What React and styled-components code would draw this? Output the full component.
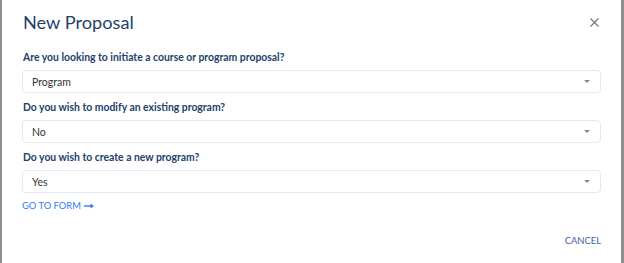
import React from 'react';
import styled, { createGlobalStyle } from 'styled-components';

const GlobalStyle = createGlobalStyle`
  html, body {
    margin: 0;
    padding: 0;
    background: #8f8f8f;
  }
  body {
    font-family: Lato, 'Open Sans', sans-serif;
  }
`;

const Backdrop = styled.div`
  display: flex;
  padding-left: 2px;
  height: 263px;
`;

const Dialog = styled.div`
  width: 619px;
  height: 263px;
  box-sizing: border-box;
  background: #ffffff;
  padding: 9px 20px 0 20px;
  display: flex;
  flex-direction: column;
`;

const Header = styled.div`
  display: flex;
  justify-content: space-between;
  align-items: center;
  height: 26px;
`;

const Title = styled.h2`
  margin: 0 0 0 1px;
  font-size: 18.2px;
  font-weight: 400;
  color: #233f6c;
  line-height: 26px;
`;

const CloseButton = styled.button`
  border: none;
  background: transparent;
  padding: 0;
  width: 14px;
  height: 14px;
  display: flex;
  align-items: center;
  justify-content: center;
  cursor: pointer;
`;

const Field = styled.div`
  display: flex;
  flex-direction: column;
  margin-top: ${(p) => p.$top}px;
`;

const Label = styled.label`
  font-size: 10.4px;
  font-weight: 700;
  color: #233f6c;
  line-height: 14px;
  margin: 0 0 6px 1px;
`;

const Select = styled.div`
  height: 23px;
  box-sizing: border-box;
  border: 1px solid #e4e9ef;
  border-radius: 4px;
  display: flex;
  align-items: center;
  justify-content: space-between;
  padding: 0 10px 0 9px;
  font-size: 10.5px;
  color: #333333;
`;

const Caret = styled.span`
  width: 0;
  height: 0;
  border-left: 3.5px solid transparent;
  border-right: 3.5px solid transparent;
  border-top: 3.5px solid #8a8a8a;
`;

const FormLink = styled.a`
  margin-top: 7px;
  font-size: 9.4px;
  color: #2f7df2;
  text-decoration: none;
  display: flex;
  align-items: center;
  gap: 3px;
  line-height: 12px;
`;

const Footer = styled.div`
  display: flex;
  justify-content: flex-end;
  margin-top: 23px;
`;

const CancelButton = styled.button`
  border: none;
  background: transparent;
  padding: 0;
  font-family: Lato, 'Open Sans', sans-serif;
  font-size: 9.4px;
  color: #3f62a0;
  line-height: 12px;
  cursor: pointer;
`;

const questions = [
  { label: 'Are you looking to initiate a course or program proposal?', value: 'Program', top: 15 },
  { label: 'Do you wish to modify an existing program?', value: 'No', top: 7 },
  { label: 'Do you wish to create a new program?', value: 'Yes', top: 7 },
];

export default function App() {
  return (
    <>
      <GlobalStyle />
      <Backdrop>
        <Dialog>
          <Header>
            <Title>New Proposal</Title>
            <CloseButton aria-label="close">
              <svg width="9" height="9" viewBox="0 0 9 9">
                <path d="M0.5 0.5L8.5 8.5M8.5 0.5L0.5 8.5" stroke="#777" strokeWidth="1.2" />
              </svg>
            </CloseButton>
          </Header>
          {questions.map((q) => (
            <Field key={q.label} $top={q.top}>
              <Label>{q.label}</Label>
              <Select>
                <span>{q.value}</span>
                <Caret />
              </Select>
            </Field>
          ))}
          <FormLink href="#">
            GO TO FORM
            <svg width="10" height="6" viewBox="0 0 10 6">
              <path d="M0 3H7.5" stroke="#2f7df2" strokeWidth="1.4" />
              <path d="M6.5 0.5L10 3L6.5 5.5Z" fill="#2f7df2" />
            </svg>
          </FormLink>
          <Footer>
            <CancelButton>CANCEL</CancelButton>
          </Footer>
        </Dialog>
      </Backdrop>
    </>
  );
}
